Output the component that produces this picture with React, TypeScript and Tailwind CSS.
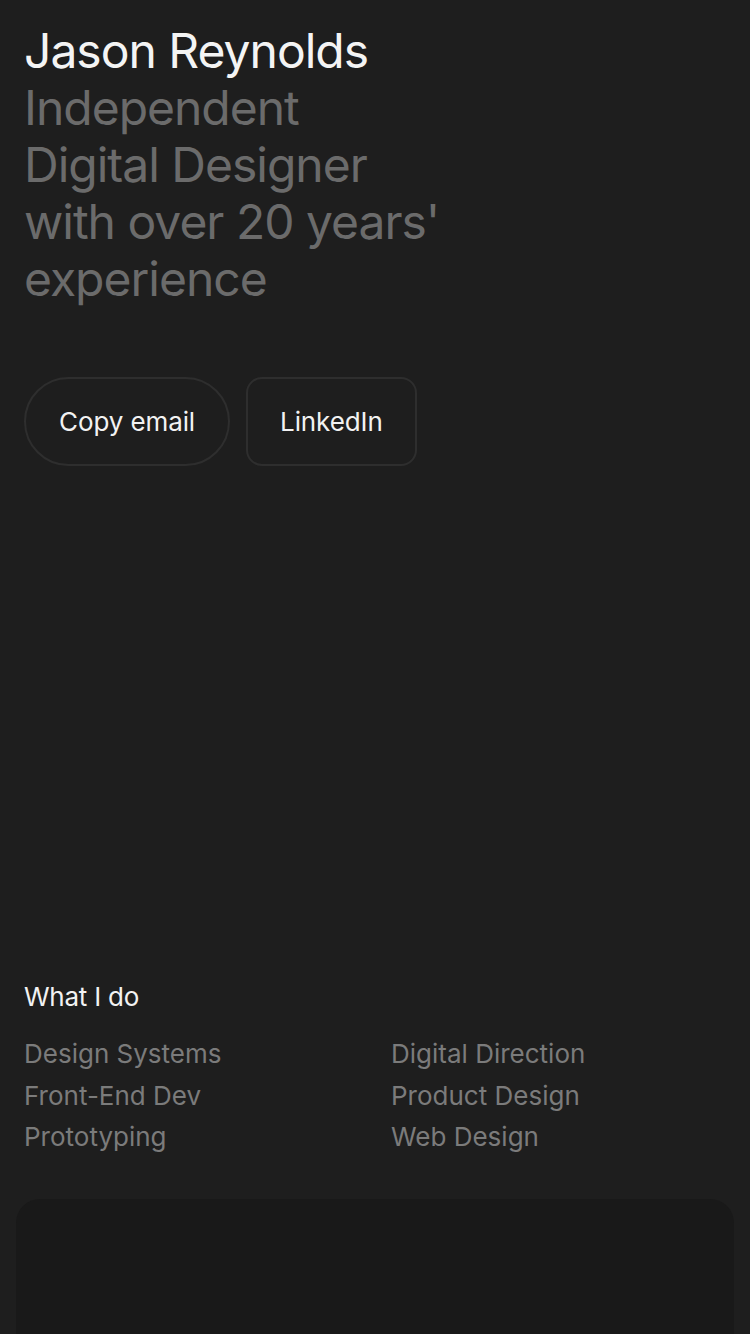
const services = [
  'Design Systems',
  'Digital Direction',
  'Front-End Dev',
  'Product Design',
  'Prototyping',
  'Web Design',
]

const tagline = ['Independent', 'Digital Designer', "with over 20 years'", 'experience']

export default function App() {
  return (
    <div className="min-h-[1334px] bg-[#1e1e1e] font-['Inter','Liberation_Sans',sans-serif] text-[#f2f2f2]">
      <section className="px-6 pt-[22px]">
        <h1 className="text-[48px] font-normal leading-[57px] tracking-[-1px]">
          <span className="block text-[#f4f4f4]">Jason Reynolds</span>
          {tagline.map((line) => (
            <span key={line} className="block whitespace-nowrap text-[#6b6b6b]">
              {line}
            </span>
          ))}
        </h1>

        <div className="mt-[70px] flex gap-4">
          <button
            type="button"
            className="flex h-[89px] items-center justify-center rounded-full border-2 border-[#2e2e2e] px-[33px] text-[26px] leading-none tracking-[-0.1px] text-[#f2f2f2]"
          >
            Copy email
          </button>
          <a
            href="#"
            className="flex h-[89px] items-center justify-center rounded-[16px] border-2 border-[#2e2e2e] px-[32px] text-[26px] leading-none tracking-[-0.1px] text-[#f2f2f2]"
          >
            LinkedIn
          </a>
        </div>
      </section>

      <section className="mt-[515px] px-6">
        <h2 className="text-[26px] font-normal leading-[32px] tracking-[-0.25px] text-[#f2f2f2]">What I do</h2>
        <ul className="mt-[20px] grid grid-cols-2 gap-x-8">
          {services.map((item) => (
            <li key={item} className="text-[26px] leading-[41.5px] text-[#7b7b7b]">
              {item}
            </li>
          ))}
        </ul>
      </section>

      <div className="mx-4 mt-[41px] h-[200px] rounded-t-[24px] bg-[#191919]" />
    </div>
  )
}
